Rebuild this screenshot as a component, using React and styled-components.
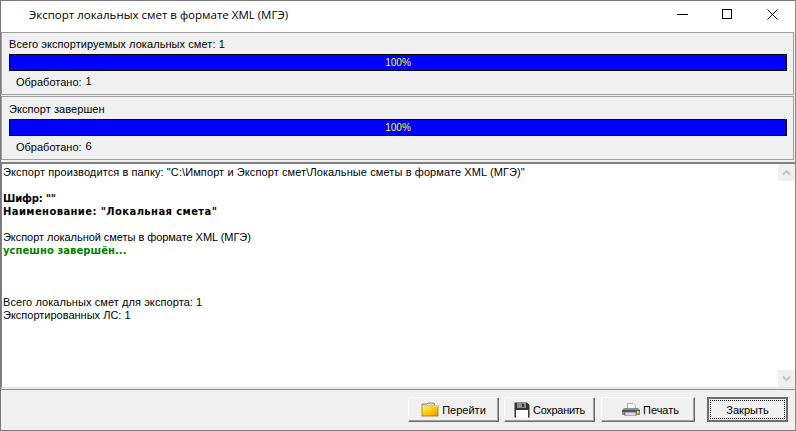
import React from 'react';
import styled, { createGlobalStyle } from 'styled-components';

const GlobalStyle = createGlobalStyle`
  html, body {
    margin: 0;
    padding: 0;
    background: #f0f0f0;
  }
`;

const Win = styled.div`
  display: flex;
  flex-direction: column;
  width: 796px;
  height: 431px;
  box-sizing: border-box;
  border: 1px solid #7a7a7a;
  border-right-color: #8a8a8a;
  background: #f0f0f0;
  font-family: "Liberation Sans", Arial, sans-serif;
  font-size: 11px;
  color: #000;
  overflow: hidden;
`;

const TitleBar = styled.div`
  display: flex;
  align-items: center;
  height: 31px;
  box-sizing: border-box;
  flex: none;
  background: #fff;
  padding: 0 0 4px 28px;
`;

const Title = styled.div`
  flex: 1;
  font-family: "Open Sans", sans-serif;
  font-size: 11.5px;
  color: #000;
`;

const WinButton = styled.div`
  display: flex;
  align-items: center;
  justify-content: center;
  width: 45px;
  height: 27px;
`;

const Panel = styled.div`
  display: flex;
  flex-direction: column;
  box-sizing: border-box;
  height: ${props => props.$height}px;
  margin: 0 1px ${props => props.$gap}px 0;
  padding: 0 6px 0 7px;
  border: 1px solid #a0a0a0;
  background: #f0f0f0;
  flex: none;
`;

const PanelLabel = styled.div`
  height: ${props => props.$height}px;
  line-height: ${props => props.$height * 2 - 19}px;
  letter-spacing: 0.07px;
  white-space: nowrap;
`;

const Bar = styled.div`
  display: flex;
  align-items: center;
  justify-content: center;
  box-sizing: border-box;
  height: 17px;
  border: 1px solid #000;
  background: #0000ff;
  color: #ffff00;
  font-size: 10px;
`;

const CountRow = styled.div`
  display: flex;
  gap: 4px;
  padding: 1px 0 0 7px;
  line-height: 21px;
`;

const CountValue = styled.span`
  margin-top: -1px;
`;

const LogFrame = styled.div`
  display: flex;
  flex: 1;
  min-height: 0;
  background: #fff;
  border-top: 2px solid #7f7f7f;
  border-left: 1px solid #7f7f7f;
  border-bottom: 1px solid #e3e3e3;
  margin-bottom: 1px;
`;

const Log = styled.div`
  flex: 1;
  padding: 2px 0 0 1px;
  line-height: 13px;
`;

const LogLine = styled.div`
  height: 13px;
  white-space: pre;
  font-family: ${props => (props.$bold ? '"DejaVu Sans", sans-serif' : 'inherit')};
  font-size: ${props => (props.$bold ? 10 : 11)}px;
  font-weight: ${props => (props.$bold ? 700 : 400)};
  letter-spacing: ${props => props.$spacing || 0}px;
  color: ${props => (props.$ok ? '#008000' : '#000')};
`;

const ScrollTrack = styled.div`
  display: flex;
  flex-direction: column;
  justify-content: space-between;
  width: 17px;
  background: #fff;
`;

const ScrollButton = styled.div`
  display: flex;
  align-items: center;
  justify-content: center;
  height: 17px;
  background: #f0f0f0;
`;

const Footer = styled.div`
  display: flex;
  justify-content: flex-end;
  flex: none;
  height: 41px;
  box-sizing: border-box;
  padding: 7px 7px 0 0;
  gap: 5px;
  border-top: 1px solid #8a8a8a;
`;

const Button = styled.div`
  display: flex;
  align-items: center;
  justify-content: center;
  gap: 3px;
  box-sizing: border-box;
  width: ${props => props.$width}px;
  height: 25px;
  margin-left: ${props => props.$left || 0}px;
  padding-left: ${props => props.$shift || 0}px;
  background: #f0f0f0;
  border: 1px solid;
  border-color: #fff #6d6d6d #6d6d6d #fff;
  box-shadow: inset -1px -1px 0 #a0a0a0;
  letter-spacing: ${props => props.$tight || 0}px;
`;

const DefaultButton = styled(Button)`
  border: 2px solid;
  border-color: #6d6d6d;
  box-shadow: none;
`;

const FocusRing = styled.div`
  display: flex;
  align-items: center;
  justify-content: center;
  box-sizing: border-box;
  width: 75px;
  height: 19px;
  border: 1px dotted #000;
`;

const FolderIcon = () => (
  <svg width="18" height="15" viewBox="0 0 18 15">
    <defs>
      <linearGradient id="folderFront" x1="0" y1="0" x2="1" y2="1">
        <stop offset="0" stopColor="#fff27a" />
        <stop offset="0.55" stopColor="#ffc400" />
        <stop offset="1" stopColor="#f08c00" />
      </linearGradient>
    </defs>
    <path d="M1 4V2h5l1-1h6l1 3z" fill="#e8e2b0" stroke="#77704a" strokeWidth="0.8" />
    <rect x="1" y="4" width="16" height="10" fill="url(#folderFront)" stroke="#9a7a20" strokeWidth="0.8" />
    <path d="M1 4h16" stroke="#fff8c0" />
  </svg>
);

const DiskIcon = () => (
  <svg width="16" height="16" viewBox="0 0 16 16">
    <path d="M0.5 0.5h12.5l2.5 2.5v12.5H0.5z" fill="#333" />
    <rect x="3" y="1" width="9" height="5" fill="#8d8d8d" />
    <rect x="8" y="2" width="2" height="3" fill="#333" />
    <rect x="2" y="8" width="12" height="8" fill="#fff" />
  </svg>
);

const PrinterIcon = () => (
  <svg width="18" height="13" viewBox="0 0 18 13">
    <path d="M5.5 0.5h5.5l2.5 2.5v3H5.5z" fill="#fff" stroke="#9a9a9a" strokeWidth="0.8" />
    <path d="M2 5h14l2 2v5H0V7z" fill="#8a8f96" />
    <rect x="0" y="7" width="18" height="2" fill="#4f5560" />
    <rect x="3" y="9" width="11" height="4" fill="#d8d8d8" stroke="#555" strokeWidth="0.6" />
    <rect x="15" y="8" width="2" height="2" fill="#ffe600" />
  </svg>
);

const panels = [
  { label: 'Всего экспортируемых локальных смет: 1', count: 1, height: 63, gap: 1, labelHeight: 21 },
  { label: 'Экспорт завершен', count: 6, height: 64, gap: 2, labelHeight: 22 },
];

const logLines = [
  { text: 'Экспорт производится в папку: "C:\\Импорт и Экспорт смет\\Локальные сметы в формате XML (МГЭ)"', spacing: 0.1 },
  { text: '' },
  { text: 'Шифр: ""', bold: true, spacing: -0.2 },
  { text: 'Наименование: "Локальная смета"', bold: true, spacing: 0.4 },
  { text: '' },
  { text: 'Экспорт локальной сметы в формате XML (МГЭ)', spacing: -0.05 },
  { text: 'успешно завершён...', bold: true, ok: true, spacing: 0.05 },
  { text: '' },
  { text: '' },
  { text: '' },
  { text: 'Всего локальных смет для экспорта: 1', spacing: 0.08 },
  { text: 'Экспортированных ЛС: 1' },
];

export default function App() {
  return (
    <>
      <GlobalStyle />
      <Win>
        <TitleBar>
          <Title>Экспорт локальных смет в формате XML (МГЭ)</Title>
          <WinButton>
            <svg width="11" height="11" viewBox="0 0 11 11"><path d="M0 5.5h11" stroke="#000" /></svg>
          </WinButton>
          <WinButton>
            <svg width="11" height="11" viewBox="0 0 11 11"><rect x="0.5" y="0.5" width="9" height="9" fill="none" stroke="#000" /></svg>
          </WinButton>
          <WinButton>
            <svg width="11" height="11" viewBox="0 0 11 11"><path d="M.5.5l10 10M10.5.5l-10 10" stroke="#000" /></svg>
          </WinButton>
        </TitleBar>
        {panels.map(panel => (
          <Panel key={panel.label} $height={panel.height} $gap={panel.gap}>
            <PanelLabel $height={panel.labelHeight}>{panel.label}</PanelLabel>
            <Bar>100%</Bar>
            <CountRow>
              <span>Обработано:</span>
              <CountValue>{panel.count}</CountValue>
            </CountRow>
          </Panel>
        ))}
        <LogFrame>
          <Log>
            {logLines.map((line, index) => (
              <LogLine key={index} $bold={line.bold} $ok={line.ok} $spacing={line.spacing}>{line.text}</LogLine>
            ))}
          </Log>
          <ScrollTrack>
            <ScrollButton>
              <svg width="9" height="7" viewBox="0 0 9 7"><path d="M1 5.5l3.5-3.5 3.5 3.5" fill="none" stroke="#c4c4c4" strokeWidth="2" /></svg>
            </ScrollButton>
            <ScrollButton>
              <svg width="9" height="7" viewBox="0 0 9 7"><path d="M1 1.5l3.5 3.5 3.5-3.5" fill="none" stroke="#c4c4c4" strokeWidth="2" /></svg>
            </ScrollButton>
          </ScrollTrack>
        </LogFrame>
        <Footer>
          <Button $width={91}><FolderIcon />Перейти</Button>
          <Button $width={91} $tight={-0.3}><DiskIcon />Сохранить</Button>
          <Button $width={94} $left={1} $shift={5}><PrinterIcon />Печать</Button>
          <DefaultButton $width={81} $left={7}><FocusRing>Закрыть</FocusRing></DefaultButton>
        </Footer>
      </Win>
    </>
  );
}
